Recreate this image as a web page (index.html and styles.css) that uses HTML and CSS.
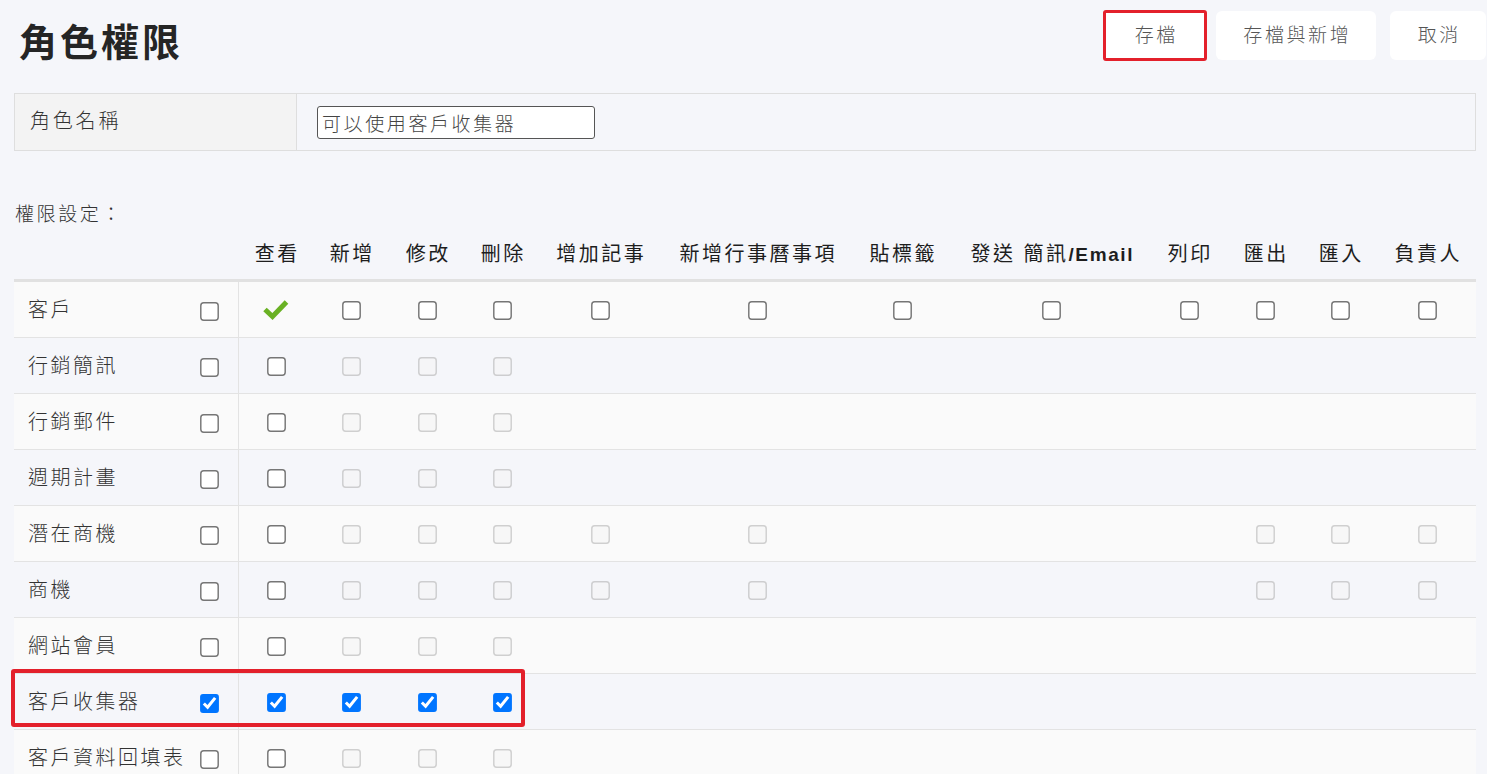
FILE: index.html
```html
<!DOCTYPE html>
<html lang="zh-TW">
<head>
    <meta charset="UTF-8">
    <meta name="viewport" content="width=device-width, initial-scale=1.0">
    <title>角色權限</title>
    <link rel="stylesheet" href="styles.css">
</head>
<body>
    <div class="page">
        <div class="top-bar">
            <h1 class="main-title">角色權限</h1>
            <div class="actions">
                <button type="button" class="btn btn-save">存檔</button>
                <button type="button" class="btn btn-save-new">存檔與新增</button>
                <button type="button" class="btn btn-cancel">取消</button>
            </div>
        </div>

        <div class="name-box">
            <div class="name-label">角色名稱</div>
            <div class="name-field">
                <input type="text" class="name-input" value="可以使用客戶收集器">
            </div>
        </div>

        <div class="section-label">權限設定：</div>

        <table class="perm-table">
            <colgroup>
                <col style="width: 224px">
                <col style="width: 76px">
                <col style="width: 74px">
                <col style="width: 78px">
                <col style="width: 72px">
                <col style="width: 124px">
                <col style="width: 190px">
                <col style="width: 100px">
                <col style="width: 198px">
                <col style="width: 78px">
                <col style="width: 74px">
                <col style="width: 76px">
                <col style="width: 98px">
            </colgroup>
            <thead>
                <tr>
                    <th></th>
                    <th>查看</th>
                    <th>新增</th>
                    <th>修改</th>
                    <th>刪除</th>
                    <th>增加記事</th>
                    <th>新增行事曆事項</th>
                    <th>貼標籤</th>
                    <th>發送 簡訊<b>/Email</b></th>
                    <th>列印</th>
                    <th>匯出</th>
                    <th>匯入</th>
                    <th>負責人</th>
                </tr>
            </thead>
            <tbody>
                <tr>
                    <td class="row-name"><div class="row-head"><span>客戶</span><input type="checkbox" class="cb row-cb"></div></td>
                    <td class="first-col">
                        <svg class="ok-mark" width="26" height="21" viewBox="0 0 26 21"><polyline points="2,10.5 9.5,17.5 23.5,3" fill="none" stroke="#69b123" stroke-width="5"/></svg>
                    </td>
                    <td><input type="checkbox" class="cb"></td>
                    <td><input type="checkbox" class="cb"></td>
                    <td><input type="checkbox" class="cb"></td>
                    <td><input type="checkbox" class="cb"></td>
                    <td><input type="checkbox" class="cb"></td>
                    <td><input type="checkbox" class="cb"></td>
                    <td><input type="checkbox" class="cb"></td>
                    <td><input type="checkbox" class="cb"></td>
                    <td><input type="checkbox" class="cb"></td>
                    <td><input type="checkbox" class="cb"></td>
                    <td><input type="checkbox" class="cb"></td>
                </tr>
                <tr>
                    <td class="row-name"><div class="row-head"><span>行銷簡訊</span><input type="checkbox" class="cb row-cb"></div></td>
                    <td class="first-col"><input type="checkbox" class="cb"></td>
                    <td><input type="checkbox" class="cb" disabled></td>
                    <td><input type="checkbox" class="cb" disabled></td>
                    <td><input type="checkbox" class="cb" disabled></td>
                    <td></td><td></td><td></td><td></td><td></td><td></td><td></td><td></td>
                </tr>
                <tr>
                    <td class="row-name"><div class="row-head"><span>行銷郵件</span><input type="checkbox" class="cb row-cb"></div></td>
                    <td class="first-col"><input type="checkbox" class="cb"></td>
                    <td><input type="checkbox" class="cb" disabled></td>
                    <td><input type="checkbox" class="cb" disabled></td>
                    <td><input type="checkbox" class="cb" disabled></td>
                    <td></td><td></td><td></td><td></td><td></td><td></td><td></td><td></td>
                </tr>
                <tr>
                    <td class="row-name"><div class="row-head"><span>週期計畫</span><input type="checkbox" class="cb row-cb"></div></td>
                    <td class="first-col"><input type="checkbox" class="cb"></td>
                    <td><input type="checkbox" class="cb" disabled></td>
                    <td><input type="checkbox" class="cb" disabled></td>
                    <td><input type="checkbox" class="cb" disabled></td>
                    <td></td><td></td><td></td><td></td><td></td><td></td><td></td><td></td>
                </tr>
                <tr>
                    <td class="row-name"><div class="row-head"><span>潛在商機</span><input type="checkbox" class="cb row-cb"></div></td>
                    <td class="first-col"><input type="checkbox" class="cb"></td>
                    <td><input type="checkbox" class="cb" disabled></td>
                    <td><input type="checkbox" class="cb" disabled></td>
                    <td><input type="checkbox" class="cb" disabled></td>
                    <td><input type="checkbox" class="cb" disabled></td>
                    <td><input type="checkbox" class="cb" disabled></td>
                    <td></td><td></td><td></td>
                    <td><input type="checkbox" class="cb" disabled></td>
                    <td><input type="checkbox" class="cb" disabled></td>
                    <td><input type="checkbox" class="cb" disabled></td>
                </tr>
                <tr>
                    <td class="row-name"><div class="row-head"><span>商機</span><input type="checkbox" class="cb row-cb"></div></td>
                    <td class="first-col"><input type="checkbox" class="cb"></td>
                    <td><input type="checkbox" class="cb" disabled></td>
                    <td><input type="checkbox" class="cb" disabled></td>
                    <td><input type="checkbox" class="cb" disabled></td>
                    <td><input type="checkbox" class="cb" disabled></td>
                    <td><input type="checkbox" class="cb" disabled></td>
                    <td></td><td></td><td></td>
                    <td><input type="checkbox" class="cb" disabled></td>
                    <td><input type="checkbox" class="cb" disabled></td>
                    <td><input type="checkbox" class="cb" disabled></td>
                </tr>
                <tr>
                    <td class="row-name"><div class="row-head"><span>網站會員</span><input type="checkbox" class="cb row-cb"></div></td>
                    <td class="first-col"><input type="checkbox" class="cb"></td>
                    <td><input type="checkbox" class="cb" disabled></td>
                    <td><input type="checkbox" class="cb" disabled></td>
                    <td><input type="checkbox" class="cb" disabled></td>
                    <td></td><td></td><td></td><td></td><td></td><td></td><td></td><td></td>
                </tr>
                <tr>
                    <td class="row-name marked"><div class="row-head"><span>客戶收集器</span><input type="checkbox" class="cb row-cb" checked></div><span class="mark-box"></span></td>
                    <td class="first-col"><input type="checkbox" class="cb" checked></td>
                    <td><input type="checkbox" class="cb" checked></td>
                    <td><input type="checkbox" class="cb" checked></td>
                    <td><input type="checkbox" class="cb" checked></td>
                    <td></td><td></td><td></td><td></td><td></td><td></td><td></td><td></td>
                </tr>
                <tr>
                    <td class="row-name"><div class="row-head"><span>客戶資料回填表</span><input type="checkbox" class="cb row-cb"></div></td>
                    <td class="first-col"><input type="checkbox" class="cb"></td>
                    <td><input type="checkbox" class="cb" disabled></td>
                    <td><input type="checkbox" class="cb" disabled></td>
                    <td><input type="checkbox" class="cb" disabled></td>
                    <td></td><td></td><td></td><td></td><td></td><td></td><td></td><td></td>
                </tr>
            </tbody>
        </table>
    </div>
</body>
</html>
```

FILE: styles.css
```css
body {
    margin: 0;
    padding: 0;
    background-color: #f5f6fa;
    color: #333;
    font-family: "Liberation Sans", "Noto Sans CJK TC", sans-serif;
    font-weight: 300;
    overflow: hidden;
}
.page {
    padding: 0 11px 0 14px;
}
.top-bar {
    display: flex;
    justify-content: space-between;
    align-items: flex-start;
    height: 93px;
    margin-right: -10px;
}
.main-title {
    margin: 21px 0 0 5px;
    font-size: 38px;
    line-height: 45px;
    font-weight: bold;
    letter-spacing: 3px;
    color: #252525;
}
.actions {
    display: flex;
    align-items: flex-start;
    margin-top: 10px;
}
.btn {
    height: 49px;
    margin-top: 1px;
    padding: 0 0 4px;
    border: none;
    border-radius: 6px;
    background-color: #fff;
    color: #555;
    font-family: inherit;
    font-size: 19px;
    font-weight: 300;
    letter-spacing: 2.6px;
    text-indent: 2.6px;
    cursor: pointer;
}
.btn-save {
    width: 104px;
    height: 51px;
    margin-top: 0;
    border: 3px solid #e3202b;
    border-radius: 3px;
}
.btn-save-new {
    width: 160px;
    margin-left: 9px;
}
.btn-cancel {
    width: 96px;
    margin-left: 14px;
}
.name-box {
    display: flex;
    height: 56px;
    border: 1px solid #dedede;
}
.name-label {
    width: 266px;
    padding-left: 15px;
    background-color: #f3f3f3;
    border-right: 1px solid #dedede;
    font-size: 20px;
    letter-spacing: 2.8px;
    line-height: 54px;
    color: #333;
}
.name-field {
    display: flex;
    align-items: center;
    padding-left: 20px;
}
.name-input {
    box-sizing: border-box;
    width: 278px;
    height: 33px;
    padding: 0 4px;
    border: 1px solid #555;
    border-radius: 3px;
    background-color: #fff;
    font-family: inherit;
    font-size: 19px;
    font-weight: 300;
    letter-spacing: 2.6px;
    color: #444;
}
.section-label {
    margin-top: 50px;
    margin-left: 1px;
    font-size: 19px;
    line-height: 27px;
    letter-spacing: 2.6px;
    color: #333;
}
.perm-table {
    width: 1462px;
    margin-top: 3px;
    border-collapse: collapse;
    table-layout: fixed;
}
.perm-table th {
    height: 43px;
    padding: 0 0 5px;
    border-bottom: 3px solid #e1e1e1;
    font-size: 20px;
    font-weight: normal;
    letter-spacing: 2.5px;
    text-indent: 2.5px;
    text-align: center;
    color: #1e1e1e;
    white-space: nowrap;
}
.perm-table th b {
    font-size: 19px;
    letter-spacing: 1.6px;
    font-weight: bold;
}
.perm-table td {
    height: 55px;
    padding: 0;
    border-bottom: 1px solid #e3e3e3;
    text-align: center;
    vertical-align: middle;
}
.perm-table tbody tr:nth-child(odd) {
    background-color: #fafafa;
}
.perm-table td.first-col {
    border-left: 1px solid #e3e3e3;
}
.row-name {
    position: relative;
}
.row-head {
    display: flex;
    justify-content: space-between;
    align-items: center;
    padding: 0 22px 0 14px;
    font-size: 20px;
    letter-spacing: 2.5px;
    color: #333;
    text-align: left;
}
.row-head span {
    margin-top: -3px;
}
.row-head .row-cb {
    margin-top: 4px;
}
.cb {
    width: 13px;
    height: 13px;
    margin: 0;
    vertical-align: middle;
    transform: scale(1.45);
    accent-color: #0075ff;
}
.ok-mark {
    display: inline-block;
    vertical-align: middle;
}
.mark-box {
    position: absolute;
    left: -3px;
    top: -5px;
    width: 506px;
    height: 50px;
    border: 4px solid #e3202b;
    border-radius: 3px;
    pointer-events: none;
}
```
